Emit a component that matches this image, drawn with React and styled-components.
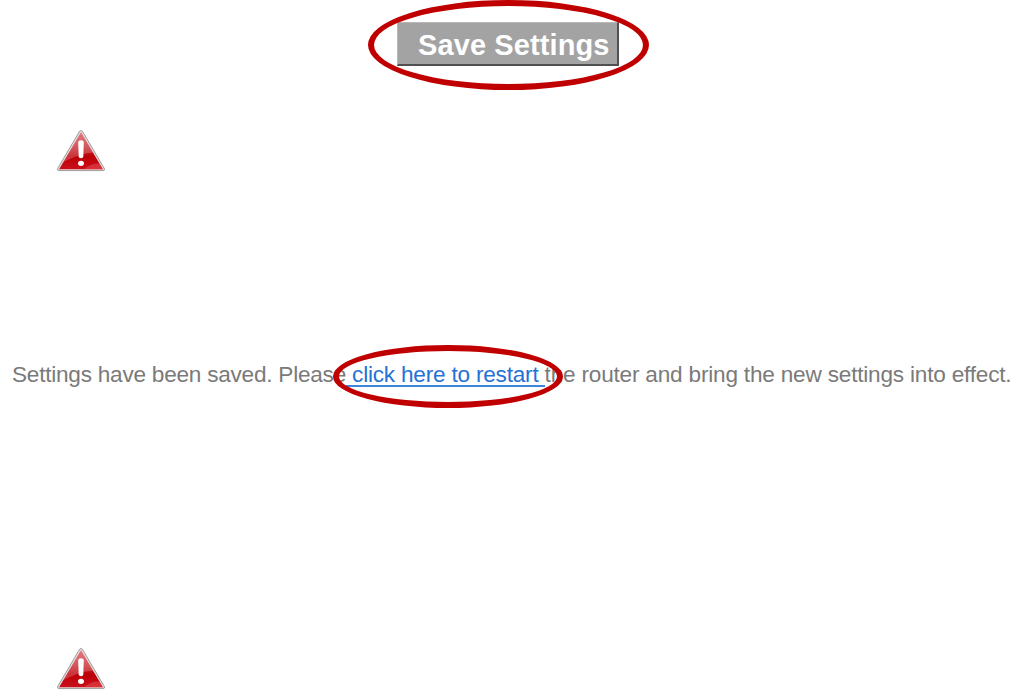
import React from "react";
import styled, { createGlobalStyle } from "styled-components";

const App = () => {
  return (
    <>
      <GlobalStyle />
      <Page>
        <ButtonRow>
          <ButtonWrap>
            <SaveButton type="button">Save Settings</SaveButton>
            <Ring $left={-29} $top={-22} $width={281} $height={90} />
          </ButtonWrap>
        </ButtonRow>
        <Warning id="top" />
        <Message>
          <Part $spacing={-0.24}>Settings have been saved. Please</Part>
          <LinkWrap>
            <RestartLink href="#restart"> click here to restart </RestartLink>
            <Ring $left={-13} $top={-17} $width={230} $height={63} />
          </LinkWrap>
          <Part $spacing={-0.2}>
            the router and bring the new settings into effect.
          </Part>
        </Message>
        <Warning id="bottom" />
      </Page>
    </>
  );
};

const Warning = ({ id }) => (
  <WarningIcon viewBox="0 0 50 44" role="img" aria-label="Warning">
    <defs>
      <linearGradient id={`${id}-red`} x1="0" y1="0" x2="0" y2="1">
        <stop offset="0" stopColor="#d8545c" />
        <stop offset="0.4" stopColor="#c92a32" />
        <stop offset="0.65" stopColor="#bd0007" />
        <stop offset="1" stopColor="#c9101a" />
      </linearGradient>
      <linearGradient id={`${id}-gloss`} x1="0" y1="0" x2="0" y2="1">
        <stop offset="0" stopColor="#fff" stopOpacity="0.22" />
        <stop offset="1" stopColor="#fff" stopOpacity="0.2" />
      </linearGradient>
    </defs>
    <path
      d="M23.6 2.2Q25 0.6 26.4 2.2L48.4 39.6Q49 41.6 47 41.6H3Q1 41.6 1.6 39.6Z"
      fill="#e6dcdc"
      stroke="#8d8585"
      strokeWidth="0.8"
    />
    <path d="M25 3.2L46.9 40.2H3.1Z" fill={`url(#${id}-red)`} />
    <path
      d="M25 3.2L37 23.4C28 24 17 28 7.4 33Z"
      fill={`url(#${id}-gloss)`}
    />
    <path d="M28 40.2Q34 34.4 43.6 34.6L46.9 40.2Z" fill="#ea5a60" opacity="0.45" />
    <path
      d="M22.2 13Q22.4 11.2 25 11.2T27.8 13L27.3 27.6Q27.2 29.2 25 29.2T22.7 27.6Z"
      fill="#fff"
    />
    <ellipse cx="25" cy="34.3" rx="3" ry="2.6" fill="#fff" />
  </WarningIcon>
);

export default App;

const GlobalStyle = createGlobalStyle`
  * {
    box-sizing: border-box;
  }
  body {
    margin: 0;
    background: #fff;
    overflow: hidden;
  }
`;

const Page = styled.main`
  display: flex;
  flex-direction: column;
  align-items: flex-start;
  width: 1021px;
  height: 691px;
  padding-top: 22px;
  font-family: "Liberation Sans", Arial, sans-serif;
`;

const ButtonRow = styled.div`
  display: flex;
  padding-left: 397px;
  margin-bottom: 63px;
`;

const ButtonWrap = styled.div`
  position: relative;
  display: flex;
  height: 44px;
`;

const SaveButton = styled.button`
  width: 222px;
  height: 44px;
  padding: 2px 0 0 20px;
  border: solid;
  border-width: 1px 2px 2px 1px;
  border-color: #b8b8b8 #505050 #505050 #b8b8b8;
  background: #a3a3a3;
  color: #fff;
  font: bold 29px/38px "Liberation Sans", Arial, sans-serif;
  letter-spacing: 0.1px;
  text-align: left;
  white-space: nowrap;
`;

/* hand-marked highlight lying over a control */
const Ring = styled.span`
  position: absolute;
  left: ${({ $left }) => $left}px;
  top: ${({ $top }) => $top}px;
  width: ${({ $width }) => $width}px;
  height: ${({ $height }) => $height}px;
  border: 6px solid #c00000;
  border-radius: 50%;
  pointer-events: none;
`;

const WarningIcon = styled.svg`
  flex: none;
  width: 50px;
  height: 44px;
  margin-left: 56px;
`;

const Message = styled.p`
  display: flex;
  height: 28px;
  margin: 189px 0 257px;
  padding-left: 12px;
  color: #7a7a7a;
  font-size: 22.6px;
  line-height: 26px;
  white-space: pre;
`;

const Part = styled.span`
  letter-spacing: ${({ $spacing }) => $spacing}px;
`;

const LinkWrap = styled.span`
  position: relative;
`;

const RestartLink = styled.a`
  display: block;
  height: 25px;
  border-bottom: 2px solid #3c86dc;
  color: #2472d4;
  letter-spacing: -0.21px;
  text-decoration: none;
`;
